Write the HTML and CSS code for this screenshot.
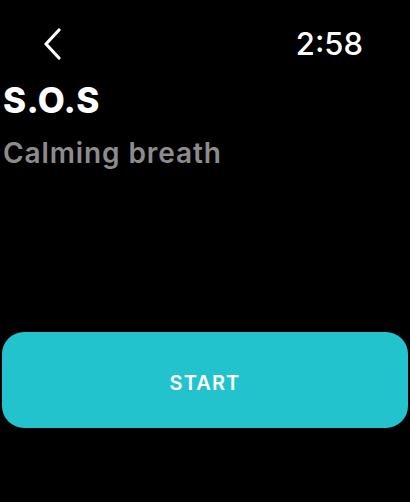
FILE: index.html
```html
<!DOCTYPE html>
<html>
<head>
<meta charset="utf-8">
<link rel="stylesheet" href="styles.css">
</head>
<body>
<div class="screen">
  <div class="header">
    <svg class="back" width="20" height="32" viewBox="0 0 20 32">
      <path d="M16 2 L3 16 L16 30" fill="none" stroke="#fff" stroke-width="3.2" stroke-linecap="round" stroke-linejoin="round"/>
    </svg>
    <div class="time">2:58</div>
  </div>
  <div class="title">S.O.S</div>
  <div class="subtitle">Calming breath</div>
  <div class="spacer"></div>
  <div class="start">START</div>
</div>
</body>
</html>
```
FILE: styles.css
```css
html, body {
  margin: 0;
  padding: 0;
  background: #000;
}
.screen {
  width: 410px;
  height: 502px;
  display: flex;
  flex-direction: column;
  font-family: Inter, "Noto Sans", sans-serif;
  color: #fff;
}
.header {
  display: flex;
  align-items: center;
  justify-content: space-between;
  height: 40px;
  margin-top: 24px;
  padding: 0 47px 0 43px;
}
.back {
  display: block;
}
.time {
  font-size: 31px;
  font-weight: 500;
  line-height: 40px;
}
.title {
  font-size: 35px;
  font-weight: 800;
  line-height: 40px;
  letter-spacing: 0.4px;
  margin: 16px 0 0 3px;
}
.subtitle {
  font-size: 28px;
  font-weight: 600;
  line-height: 36px;
  letter-spacing: 0.9px;
  margin: 15px 0 0 3px;
  color: #8c8c8c;
}
.spacer {
  height: 161px;
}
.start {
  margin: 0 2px;
  height: 96px;
  box-sizing: border-box;
  padding-top: 6px;
  border-radius: 22px;
  background: #22c3cd;
  display: flex;
  align-items: center;
  justify-content: center;
  font-size: 20px;
  font-weight: 600;
  letter-spacing: 1.1px;
}
```
